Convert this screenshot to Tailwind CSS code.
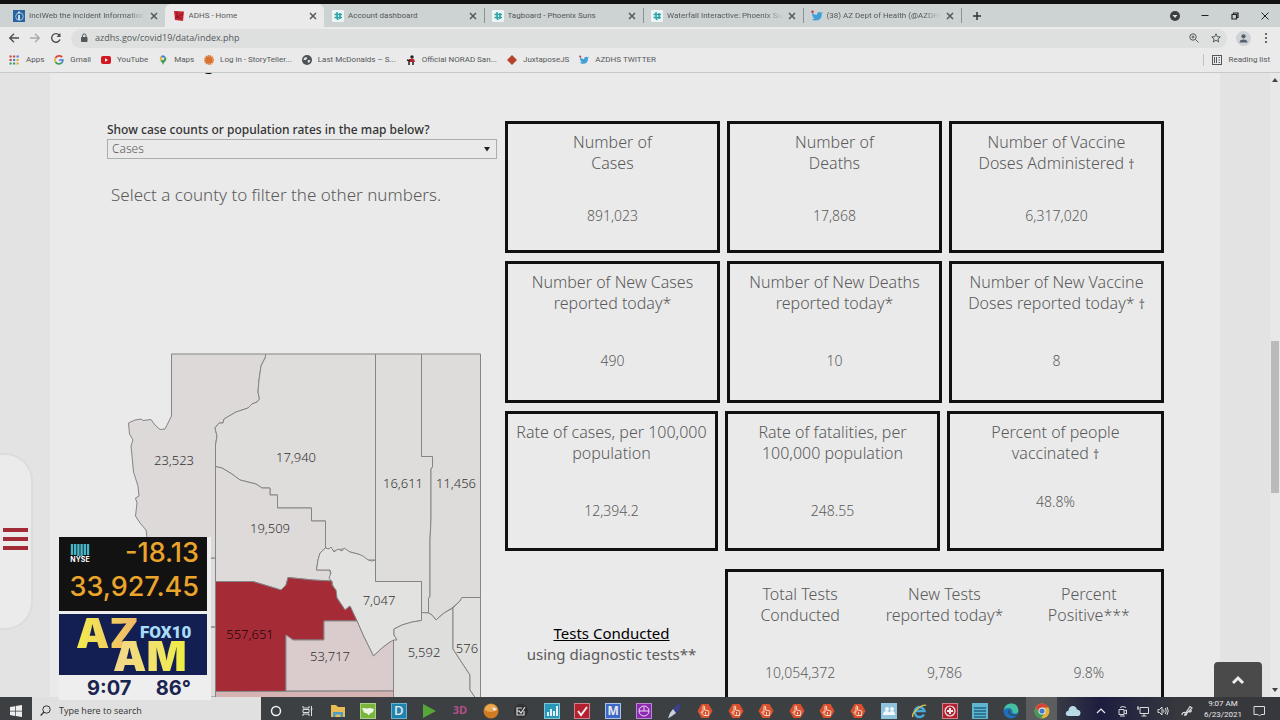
<!DOCTYPE html>
<html lang="en">

    <head>
        <meta charset="UTF-8">
        <meta name="viewport" content="width=device-width, initial-scale=1.0">
        <title>ADHS - Home</title>
        <script src="https://cdn.jsdelivr.net/npm/@tailwindcss/browser@4"></script>
    </head>

    <body class="relative flex h-screen flex-col overflow-hidden bg-[#eaeaea] font-['Open_Sans',sans-serif] text-[#55585a]">

        <!-- Shared icons -->
        <svg class="hidden">
            <symbol id="x" viewBox="0 0 10 10"><path d="M2 2l6 6M8 2l-6 6" stroke="currentColor" stroke-width="1.5" /></symbol>
            <symbol id="tagboard" viewBox="0 0 12 12">
                <rect width="12" height="12" rx="1" fill="#eef5f5" />
                <path d="M5 2v6q0 1.500 1.500 1.500M8 3v6M2.500 4.500H10M2.500 7.500H10" fill="none" stroke="#2aa3a8" stroke-width="1.500" />
            </symbol>
            <symbol id="twitter" viewBox="0 0 12 12">
                <path d="M1 2.500q2 2.500 5 2.500 0-3 2.500-3 1 0 1.700.7L11.800 2q-.2 1-1 1.500.2 7-6.300 7Q2.300 10.500.6 9.400q2 0 3-.9Q2 8 1.500 6.700h1Q1 6 1 4.300l.9.200Q.4 3.500 1 2.500z" fill="#3f9fd6" />
                <circle cx="1.500" cy="1.800" r="1.300" fill="#c33b4c" />
            </symbol>
            <symbol id="hand" viewBox="0 0 16 16">
                <path d="M4.500 1h7L15.500 8l-4 7h-7L.5 8z" fill="#d9512c" />
                <path d="M6 9V3.500q.8-1 1.600 0V7l3.700.8q.7.200.6 1l-.5 3.700H6.800L3.800 9.300q.6-1 2.200 0z" fill="none" stroke="#f6ddd4" stroke-width="1" />
                <path d="M8.500 9v2.500" stroke="#f6ddd4" />
            </symbol>
        </svg>

        <div class="h-1 shrink-0 bg-[#111]"></div>

        <!-- Tab strip -->
        <header class="flex h-[23px] shrink-0 items-stretch bg-[#cdd2d3] pl-[5px] text-[8px]">
            <nav class="grid w-[957px] grid-cols-6 font-['Roboto',sans-serif]">
                <a href="#" class="flex items-center gap-1 pr-1.5 pl-2">
                    <svg class="size-3 shrink-0" viewBox="0 0 12 12"><rect width="12" height="12" fill="#2a64a0" /><circle cx="6.500" cy="6.500" r="3.800" fill="none" stroke="#9cc3e6" /><path d="M6 1.500v2M6 5v5" stroke="#fff" stroke-width="1.500" /></svg>
                    <span class="flex-1 overflow-hidden whitespace-nowrap mask-r-from-85%">InciWeb the Incident Information</span>
                    <svg class="size-2.5 shrink-0"><use href="#x" /></svg>
                </a>
                <a href="#" class="flex items-center gap-1 rounded-t-md bg-[#eaeaea] pr-1.5 pl-2">
                    <svg class="size-3 shrink-0" viewBox="0 0 12 12"><path d="M1 1l10 .5L10 11 2 10z" fill="#c62632" /><path d="M4 1.500v6l5 1M2 8l8-4" stroke="#8d1420" fill="none" /></svg>
                    <span class="flex-1 overflow-hidden whitespace-nowrap">ADHS - Home</span>
                    <svg class="size-2.5 shrink-0"><use href="#x" /></svg>
                </a>
                <a href="#" class="flex items-center gap-1 pr-1.5 pl-2">
                    <svg class="size-3 shrink-0"><use href="#tagboard" /></svg>
                    <span class="flex-1 overflow-hidden whitespace-nowrap">Account dashboard</span>
                    <svg class="size-2.5 shrink-0"><use href="#x" /></svg>
                </a>
                <a href="#" class="my-1 flex items-center gap-1 border-l border-[#8d9293] pr-1.5 pl-[7px]">
                    <svg class="size-3 shrink-0"><use href="#tagboard" /></svg>
                    <span class="flex-1 overflow-hidden whitespace-nowrap">Tagboard - Phoenix Suns</span>
                    <svg class="size-2.5 shrink-0"><use href="#x" /></svg>
                </a>
                <a href="#" class="my-1 flex items-center gap-1 border-l border-[#8d9293] pr-1.5 pl-[7px]">
                    <svg class="size-3 shrink-0"><use href="#tagboard" /></svg>
                    <span class="flex-1 overflow-hidden whitespace-nowrap mask-r-from-85%">Waterfall Interactive: Phoenix Sun</span>
                    <svg class="size-2.5 shrink-0"><use href="#x" /></svg>
                </a>
                <a href="#" class="my-1 flex items-center gap-1 border-x border-[#8d9293] pr-1.5 pl-[7px]">
                    <svg class="size-3 shrink-0"><use href="#twitter" /></svg>
                    <span class="flex-1 overflow-hidden whitespace-nowrap mask-r-from-85%">(38) AZ Dept of Health (@AZDHS</span>
                    <svg class="size-2.5 shrink-0"><use href="#x" /></svg>
                </a>
            </nav>
            <button type="button" aria-label="New tab" class="ml-2.5"><svg class="size-2.5" viewBox="0 0 10 10"><path d="M5 1v8M1 5h8" stroke="#333" stroke-width="1.500" /></svg></button>
            <div class="ml-auto flex items-center gap-5 pr-2.5">
                <button type="button" aria-label="Search tabs"><svg class="size-2.5" viewBox="0 0 10 10"><circle cx="5" cy="5" r="5" fill="#3c4043" /><path d="M2.500 4h5L5 7z" fill="#dfe3e3" /></svg></button>
                <button type="button" aria-label="Minimize"><svg class="size-2.5" viewBox="0 0 10 10"><path d="M1.500 4.500h7" stroke="#222" /></svg></button>
                <button type="button" aria-label="Restore"><svg class="size-2.5" viewBox="0 0 10 10"><path d="M2 3.500h4.500V8H2zM3.500 3V2H8v4.500H7" fill="none" stroke="#222" stroke-width="1.200" /></svg></button>
                <button type="button" aria-label="Close"><svg class="size-2.5" viewBox="0 0 10 10"><path d="M1.500 1.500l7 7M8.500 1.500l-7 7" stroke="#222" /></svg></button>
            </div>
        </header>

        <!-- Address bar -->
        <div class="flex h-[22px] shrink-0 items-center gap-[9px] px-2">
            <button type="button" aria-label="Back"><svg class="size-3" viewBox="0 0 12 12"><path d="M11 6H2M6 1.700L1.700 6 6 10.300" fill="none" stroke="#4a4d50" stroke-width="1.300" /></svg></button>
            <button type="button" aria-label="Forward"><svg class="size-3" viewBox="0 0 12 12"><path d="M1 6h9M6 1.700L10.300 6 6 10.300" fill="none" stroke="#a6a9ab" stroke-width="1.300" /></svg></button>
            <button type="button" aria-label="Reload"><svg class="size-3" viewBox="0 0 12 12"><path d="M10 7.500A4.300 4.300 0 1 1 9.300 3.200" fill="none" stroke="#4a4d50" stroke-width="1.400" /><path d="M10.500 1v4h-4z" fill="#4a4d50" /></svg></button>
            <div class="flex h-[19px] flex-1 items-center rounded-full bg-[#dde0df] pr-1.5 pl-2">
                <svg class="mr-1.5 size-2.5" viewBox="0 0 10 10"><rect x="2" y="4" width="6.500" height="5" rx=".7" fill="#54585b" /><path d="M3.500 4V2.700a1.700 1.700 0 0 1 3.500 0V4" fill="none" stroke="#54585b" /></svg>
                <input type="text" aria-label="Address" value="azdhs.gov/covid19/data/index.php" class="w-0 flex-1 bg-transparent text-[9px] outline-none">
                <svg class="mr-3 size-2.5" viewBox="0 0 10 10"><circle cx="4" cy="4" r="3.200" fill="none" stroke="#55585b" /><path d="M6.500 6.500L9.500 9.500M2.500 4h3M4 2.500v3" stroke="#55585b" /></svg>
                <svg class="size-2.5" viewBox="0 0 10 10"><path d="M5 .8l1.200 2.900 3.100.2-2.400 2 .8 3L5 7.300 2.300 8.900l.8-3-2.400-2 3.100-.2z" fill="none" stroke="#4a4d50" stroke-width=".9" /></svg>
            </div>
            <button type="button" aria-label="Profile"><svg class="size-[15px]" viewBox="0 0 15 15"><circle cx="7.500" cy="7.500" r="7.500" fill="#cfd3d8" /><circle cx="7.500" cy="5.300" r="2.100" fill="#56606e" /><path d="M3.500 11.500q0-3 4-3t4 3z" fill="#56606e" /></svg></button>
            <button type="button" aria-label="Menu"><svg class="size-3" viewBox="0 0 12 12"><circle cx="6" cy="2" r="1.100" fill="#4a4d50" /><circle cx="6" cy="6" r="1.100" fill="#4a4d50" /><circle cx="6" cy="10" r="1.100" fill="#4a4d50" /></svg></button>
        </div>

        <!-- Bookmarks -->
        <nav class="flex h-6 shrink-0 items-center gap-2.5 border-b border-[#c8caca] pr-2.5 pb-0.5 pl-2 font-['Roboto',sans-serif] text-[8px] whitespace-nowrap">
            <a href="#" class="flex items-center gap-1.5"><svg class="size-3" viewBox="0 0 12 12"><path d="M1.500 2.500h2.200M1.500 6h2.200M5 2.500h2.200" stroke="#c9483f" stroke-width="2" /><path d="M1.500 9.500h2.200M5 9.500h2.200" stroke="#45965b" stroke-width="2" /><path d="M8.500 2.500h2.200M5 6h2.200" stroke="#4a7fd0" stroke-width="2" /><path d="M8.500 6h2.200M8.500 9.500h2.200" stroke="#e0a838" stroke-width="2" /></svg>Apps</a>
            <a href="#" class="flex items-center gap-1.5"><svg class="size-2.5" viewBox="0 0 10 10"><g fill="none" stroke-width="1.700"><path d="M8.200 2.300A4 4 0 0 0 1.500 3" stroke="#d8493e" /><path d="M1.500 3a4 4 0 0 0 0 4" stroke="#e8b236" /><path d="M1.500 7a4 4 0 0 0 6 1" stroke="#44a05a" /><path d="M7.500 8A4 4 0 0 0 8.900 5H5" stroke="#4680d8" /></g></svg>Gmail</a>
            <a href="#" class="flex items-center gap-1.5"><svg class="size-2.5" viewBox="0 0 10 10"><rect y="1" width="10" height="8" rx="2" fill="#d3161f" /><path d="M4 3.300v3.400L7 5z" fill="#fff" /></svg>YouTube</a>
            <a href="#" class="flex items-center gap-1.5"><svg class="size-2.5" viewBox="0 0 10 10"><path d="M5 10Q4.500 7.500 2.500 6L7.500 2q1.800 2-.2 4.200Q5.500 8 5 10z" fill="#3f9c56" /><path d="M2.500 6Q.7 3 3 1l2 2z" fill="#e0b030" /><path d="M3 1q2.500-2 4.600.8L5 4z" fill="#4680d8" /><circle cx="5" cy="3.700" r="1.200" fill="#eaeaea" /></svg>Maps</a>
            <a href="#" class="flex items-center gap-1.5"><svg class="size-2.5" viewBox="0 0 10 10"><circle cx="5" cy="5" r="4.200" fill="none" stroke="#d9722f" stroke-width="1.500" stroke-dasharray="1.300 .7" /><circle cx="5" cy="5" r="3.800" fill="#d9722f" /></svg>Log in - StoryTeller...</a>
            <a href="#" class="flex items-center gap-1.5"><svg class="size-2.5" viewBox="0 0 10 10"><circle cx="5" cy="5" r="5" fill="#4e5255" /><path d="M2 3l2-1 1.500 1L4 5 1.500 5zM6 5l2.500 0L7 8 5.500 7z" fill="#dfe1e1" /></svg>Last McDonalds – S...</a>
            <a href="#" class="flex items-center gap-1.5"><svg class="size-2.5" viewBox="0 0 10 10"><circle cx="6" cy="2" r="1.700" fill="#222" /><path d="M3 4h5l1 3H2z" fill="#b3262d" /><path d="M3 7v3M7 7v3M1 5l3 1" stroke="#222" stroke-width="1.500" /></svg>Official NORAD San...</a>
            <a href="#" class="flex items-center gap-1.5"><svg class="size-2.5" viewBox="0 0 10 10"><path d="M5 0l5 5-5 5-5-5z" fill="#b5442d" /></svg>JuxtaposeJS</a>
            <a href="#" class="flex items-center gap-1.5"><svg class="size-2.5"><use href="#twitter" /></svg>AZDHS TWITTER</a>
            <a href="#" class="ml-auto flex items-center gap-1.5 border-l border-[#c0c2c2] pl-2"><svg class="size-2.5" viewBox="0 0 10 10"><rect x=".5" y=".5" width="9" height="9" fill="none" stroke="#55585b" /><path d="M2.500 2v6M4.500 2v6M6.500 2.500h1.500M6.500 5h1.500M6.500 7.500h1.500" stroke="#55585b" /></svg>Reading list</a>
        </nav>

        <!-- Page -->
        <div class="relative flex min-h-0 flex-1">
            <aside class="w-[50px] shrink-0 bg-[#e3e3e3]"></aside>

            <main class="relative flex min-w-0 flex-1 items-start gap-2 overflow-hidden pt-12 pr-14 pl-[57px] font-['Noto_Sans',sans-serif] font-light text-[#5a5a5a]">
                <h2 class="absolute bottom-full left-[154px] -mb-[3px] h-6 text-[17px]/6 font-bold text-black">g</h2>

                <!-- County map -->
                <section class="min-w-0 flex-[390]">
                    <label for="measure" class="block text-[12px]/[18px] font-medium text-[#333]">Show case counts or population rates in the map below?</label>
                    <div class="relative">
                        <select id="measure" class="block h-5 w-full appearance-none border border-[#aaaeae] bg-transparent px-1 text-[12px]/[18px]">
                            <option>Cases</option>
                            <option>Rates</option>
                        </select>
                        <svg class="pointer-events-none absolute top-2 right-1.5 h-[5px] w-2" viewBox="0 0 8 5"><path d="M1 0h6L4 4.500z" fill="#222" /></svg>
                    </div>
                    <p class="mt-6 pl-1 text-[17px]/6">Select a county to filter the other numbers.</p>

                    <svg class="mt-[140px] block h-auto w-full" viewBox="107 347 390 350" stroke="#858585" stroke-width="1" stroke-linejoin="round">
                        <!-- La Paz -->
                        <path d="M150 558L215.500 558V627H150zM150 627H215.500V697H150z" fill="#dedcdc" />
                        <!-- Mohave -->
                        <path d="M171.500 354V416L165 429 160 429.500 155 425 151 419.500 143 420.500 141 419 135 420 128.500 423 129.500 434 133 440 131 446 132 456 133.500 472 138 486 139 496 135.500 498 137 503 135.500 516 140 523 146 530 148 545 160 558H215.500V445L217 436 215 428 219 423 223 423 224 419 236 412 248 408 252 404 257 402 259.500 399 258 392 259 380 261 366 265.500 357V354z" fill="#dcd9d8" />
                        <!-- Coconino -->
                        <path d="M265.500 354V357L261 366 259 380 258 392 259.500 399 257 402 252 404 248 408 236 412 224 419 223 423 219 423 215 428 217 436 215.500 445V466.500L222 468 232 474 240 480 256 484 262 488 270 488V495H277.500V508H311.500V521H325.500V548L329 549 334 551 342 549 350 552 358 554 368 560 375.500 560V354z" fill="#dedddb" />
                        <!-- Navajo -->
                        <path d="M375.500 354H421.500V456.500H432.500V467L431 469V519L430 540V597L428.500 598V613L421.500 612.500V581.500H375.500z" fill="#dedddb" />
                        <!-- Apache -->
                        <path d="M421.500 354H480.500V597.500H462L460 601 452 608 444 613 436 620 432 615 428.500 613V598L430 597V540L431 519V469L432.500 467V456.500H421.500z" fill="#dddcda" />
                        <!-- Yavapai -->
                        <path d="M215.500 466.500L222 468 232 474 240 480 256 484 262 488 270 488V495H277.500V508H311.500V521H325.500V548L320 553 318 560 316.500 570H330L331 581 313 580 288 577.500 286 585 281 590 253 581.500H215.500z" fill="#dedad9" />
                        <!-- Gila -->
                        <path d="M325.500 548L329 549 331 547 334 552 338 549 342 551 344 548 350 552 358 554 363 556 368 560 372 561 375.500 560V581.500H421.500V620.500L412 622 402 625 394 629 394 635 397 640 390 642 382 648 373.500 656 364 637 357 621 350 606 345 610 337 598 334 590 332 582 329 578 331 573 330 570H316.500L318 560 320 553z" fill="#e2e3e1" />
                        <!-- Maricopa -->
                        <path d="M215.500 581.500H253L281 590 286 585 288 577.500 313 580 332 581 332 585 336 590 337 598 345 610 350 606 357 621H324V640H293L286 635V691.500H215.500z" fill="#a52b37" />
                        <!-- Pinal -->
                        <path d="M286 635L293 640H324V621H357L364 637 373.500 656 382 648 390 642 393.500 640V691H286z" fill="#dacccc" />
                        <!-- Pima -->
                        <path d="M215.500 691.500L393.500 691V700H215.500z" fill="#d5b3b3" />
                        <!-- Graham -->
                        <path d="M393.500 640H397L394 635 394 629 402 625 412 622 421.500 620.500V612.500L428.500 613 432 615 436 620 444 613 453 608V649L470 675 470 690 477 700H393.500z" fill="#dededd" />
                        <!-- Greenlee -->
                        <path d="M453 608L460 601 462 597.500H480.500V700H477L470 690 470 675 453 649z" fill="#e0e0df" />
                        <g fill="#333" stroke="none" text-anchor="middle" class="text-[13px]">
                            <text x="174" y="465">23,523</text>
                            <text x="296" y="462">17,940</text>
                            <text x="403" y="488">16,611</text>
                            <text x="456" y="488">11,456</text>
                            <text x="270" y="533">19,509</text>
                            <text x="379" y="605">7,047</text>
                            <text x="250" y="639" fill="#1c0508">557,651</text>
                            <text x="330" y="661">53,717</text>
                            <text x="424" y="657">5,592</text>
                            <text x="467" y="653">576</text>
                        </g>
                    </svg>
                </section>

                <!-- Totals -->
                <section class="min-w-0 flex-[659] space-y-2 text-center text-[16px]/[21px]">
                    <div class="grid grid-cols-3 gap-[7px]">
                        <article class="h-[132px] border-3 border-[#111] pt-2">
                            <h3>Number of<br>Cases</h3>
                            <p class="mt-[31px] text-[14px]/[21px]">891,023</p>
                        </article>
                        <article class="h-[132px] border-3 border-[#111] pt-2">
                            <h3>Number of<br>Deaths</h3>
                            <p class="mt-[31px] text-[14px]/[21px]">17,868</p>
                        </article>
                        <article class="h-[132px] border-3 border-[#111] pt-2">
                            <h3>Number of Vaccine<br>Doses Administered <small class="text-[12px]/[12px] font-normal">†</small></h3>
                            <p class="mt-[31px] text-[14px]/[21px]">6,317,020</p>
                        </article>
                    </div>
                    <div class="grid grid-cols-3 gap-[7px]">
                        <article class="h-[142px] border-3 border-[#111] pt-2">
                            <h3>Number of New Cases<br>reported today*</h3>
                            <p class="mt-9 text-[14px]/[21px]">490</p>
                        </article>
                        <article class="h-[142px] border-3 border-[#111] pt-2">
                            <h3>Number of New Deaths<br>reported today*</h3>
                            <p class="mt-9 text-[14px]/[21px]">10</p>
                        </article>
                        <article class="h-[142px] border-3 border-[#111] pt-2">
                            <h3>Number of New Vaccine<br>Doses reported today* <small class="text-[12px]/[12px] font-normal">†</small></h3>
                            <p class="mt-9 text-[14px]/[21px]">8</p>
                        </article>
                    </div>
                    <div class="grid grid-cols-[213fr_215fr_217fr] gap-[7px]">
                        <article class="h-[140px] border-3 border-[#111] pt-2">
                            <h3>Rate of cases, per 100,000<br>population</h3>
                            <p class="mt-9 text-[14px]/[21px]">12,394.2</p>
                        </article>
                        <article class="h-[140px] border-3 border-[#111] pt-2">
                            <h3>Rate of fatalities, per<br>100,000 population</h3>
                            <p class="mt-9 text-[14px]/[21px]">248.55</p>
                        </article>
                        <article class="h-[140px] border-3 border-[#111] pt-2">
                            <h3>Percent of people<br>vaccinated <small class="text-[12px]/[12px] font-normal">†</small></h3>
                            <p class="mt-[27px] text-[14px]/[21px]">48.8%</p>
                        </article>
                    </div>
                    <div class="grid grid-cols-[213fr_439fr] gap-[7px] pt-2.5">
                        <p class="pt-[54px] text-[15px]/[21px] font-normal"><span class="text-black underline">Tests Conducted</span><br>using diagnostic tests**</p>
                        <div class="h-48 border-3 border-[#111]">
                            <table class="w-full table-fixed">
                                <thead>
                                    <tr>
                                        <th class="pt-3 font-light">Total Tests<br>Conducted</th>
                                        <th class="pt-3 font-light">New Tests<br>reported today*</th>
                                        <th class="pt-3 font-light">Percent<br>Positive***</th>
                                    </tr>
                                </thead>
                                <tbody>
                                    <tr class="text-[14px]/[21px]">
                                        <td class="pt-9">10,054,372</td>
                                        <td class="pt-9">9,786</td>
                                        <td class="pt-9">9.8%</td>
                                    </tr>
                                </tbody>
                            </table>
                        </div>
                    </div>
                </section>
            </main>

            <aside class="w-[50px] shrink-0 bg-[#e3e3e3]"></aside>

            <!-- Scrollbar -->
            <div class="flex w-2.5 shrink-0 flex-col items-center justify-between bg-[#e8e8e8] py-1">
                <svg class="size-1.5" viewBox="0 0 6 6"><path d="M0 5h6L3 1z" fill="#444" /></svg>
                <div class="mt-16 h-[152px] w-2 bg-[#b9bbbb]"></div>
                <svg class="size-1.5" viewBox="0 0 6 6"><path d="M0 1h6L3 5z" fill="#444" /></svg>
            </div>

            <!-- Floating buttons -->
            <button type="button" aria-label="Open menu" class="absolute bottom-[67px] left-0 flex h-[177px] w-[33px] flex-col items-start justify-center gap-[5px] rounded-r-[28px] border-2 border-l-0 border-[#dcdcdc] bg-[#ebebeb] pb-1.5 pl-[3px]">
                <span class="h-1 w-[25px] bg-[#a22b37]"></span>
                <span class="h-1 w-[25px] bg-[#a22b37]"></span>
                <span class="h-1 w-[25px] bg-[#a22b37]"></span>
            </button>
            <button type="button" aria-label="Back to top" class="absolute right-[18px] bottom-0 flex h-[35px] w-12 items-center justify-center rounded-t bg-[#4a4a4a]">
                <svg class="h-2.5 w-3.5" viewBox="0 0 14 10"><path d="M2 8l5-5 5 5" fill="none" stroke="#eee" stroke-width="3" /></svg>
            </button>
        </div>

        <!-- Taskbar -->
        <footer class="flex h-[23px] shrink-0 items-stretch bg-linear-to-r from-[#3d4043] from-82% via-[#1d1d40] via-86% to-[#36383d] to-92% text-[#e8e8e8]">
            <button type="button" aria-label="Start" class="flex w-8 items-center justify-center"><svg class="mt-1 size-3" viewBox="0 0 12 12"><path d="M0 2l5-.8v4.500H0zM5.700 1L12 0v5.700H5.700zM0 6.400h5v4.500L0 10zM5.700 6.400H12V12l-6.300-1z" fill="#eee" /></svg></button>
            <div class="flex w-[229px] items-center gap-2 bg-[#e0e0e0] pt-1 pl-2">
                <svg class="size-[11px]" viewBox="0 0 11 11"><circle cx="6.500" cy="4.500" r="3.700" fill="none" stroke="#333" /><path d="M4 7L.7 10.500" stroke="#333" stroke-width="1.200" /></svg>
                <input type="text" aria-label="Search" placeholder="Type here to search" class="w-0 flex-1 bg-transparent text-[9px] outline-none placeholder:text-[#333]">
            </div>
            <div class="grid flex-1 grid-cols-[repeat(26,minmax(0,1fr))] *:flex *:items-center *:justify-center *:pt-1">
                <button type="button" aria-label="Cortana"><svg class="size-4" viewBox="0 0 16 16"><circle cx="8" cy="8" r="4.500" fill="none" stroke="#eee" stroke-width="1.500" /></svg></button>
                <button type="button" aria-label="Task view"><svg class="size-4" viewBox="0 0 16 16"><path d="M4 3v2h6V3M4 13v-2h6v2M4 6.500h6v3H4zM12.500 3v10M11.500 6h2" fill="none" stroke="#ddd" /></svg></button>
                <button type="button" aria-label="File Explorer"><svg class="size-4" viewBox="0 0 16 16"><path d="M1 2h5l2 2h7v10H1z" fill="#e9bd53" /><path d="M3 14V9h10v5h-2.500v-2.500h-5V14z" fill="#4d9cc9" /></svg></button>
                <button type="button" aria-label="Map app"><svg class="size-4" viewBox="0 0 16 16"><rect x=".5" y=".5" width="15" height="15" fill="#79b43c" stroke="#a9cf83" /><path d="M2 5l5 .5 3-.5 4 1-1 3-3 1.500-1 2-2-2-3-1z" fill="#eef4e6" /></svg></button>
                <button type="button" aria-label="D"><span class="flex size-4 items-center justify-center border border-[#6cb2d0] bg-[#1f83b0] text-[13px] font-semibold">D</span></button>
                <button type="button" aria-label="Play"><svg class="size-4" viewBox="0 0 16 16"><path d="M2 1l13 7-13 7z" fill="#57a639" /></svg></button>
                <button type="button" aria-label="3D"><span class="text-[11px] font-bold text-[#b54f8b]">3D</span></button>
                <button type="button" aria-label="Globe"><svg class="size-4" viewBox="0 0 16 16"><circle cx="8" cy="8" r="7.500" fill="#d07a22" /><path d="M1.500 7q6 4 13 0Q14 2 8 1 2 2 1.500 7z" fill="#e9a653" /><path d="M9 4l5 2-3 2z" fill="#eee" /></svg></button>
                <button type="button" aria-label="Tasks"><svg class="size-4" viewBox="0 0 16 16"><circle cx="8" cy="8" r="7" fill="#2d2f31" /><path d="M11 8v4H4V5h5M6 8l2 2 4-6M4 8h3" fill="none" stroke="#ddd" stroke-width="1.200" /></svg></button>
                <button type="button" aria-label="Charts"><svg class="size-4" viewBox="0 0 16 16"><rect x=".5" y=".5" width="15" height="15" fill="#2b97b8" stroke="#7fc3d6" /><path d="M4 13V9M7 13V6M10 13V8M13 13V3" stroke="#dff3f8" stroke-width="2" /></svg></button>
                <button type="button" aria-label="Check"><svg class="size-4" viewBox="0 0 16 16"><rect x=".5" y=".5" width="15" height="15" fill="#b3202f" stroke="#cf8088" /><path d="M4 8l3 4 6-8" fill="none" stroke="#eee" stroke-width="2" /></svg></button>
                <button type="button" aria-label="M"><span class="flex size-4 items-center justify-center border border-[#a8c0ea] bg-[#3d68c8] text-[12px] font-bold">M</span></button>
                <button type="button" aria-label="Clock app"><svg class="size-4" viewBox="0 0 16 16"><rect x=".5" y=".5" width="15" height="15" fill="#8d28b3" stroke="#b887cc" /><circle cx="8" cy="8" r="5" fill="none" stroke="#eadcf0" /><path d="M8 4v4M3 8h10" stroke="#eadcf0" /></svg></button>
                <button type="button" aria-label="Pen"><svg class="size-4" viewBox="0 0 16 16"><path d="M15 0L9 4 6 8l3 3 4-4z" fill="#3a3f92" /><path d="M7 6l3 4-4 3-4 2.500L4 10z" fill="#c9d3df" /></svg></button>
                <button type="button" aria-label="Touch 1"><svg class="size-4"><use href="#hand" /></svg></button>
                <button type="button" aria-label="Touch 2"><svg class="size-4"><use href="#hand" /></svg></button>
                <button type="button" aria-label="Touch 3"><svg class="size-4"><use href="#hand" /></svg></button>
                <button type="button" aria-label="Touch 4"><svg class="size-4"><use href="#hand" /></svg></button>
                <button type="button" aria-label="Touch 5"><svg class="size-4"><use href="#hand" /></svg></button>
                <button type="button" aria-label="Touch 6"><svg class="size-4"><use href="#hand" /></svg></button>
                <button type="button" aria-label="People"><svg class="size-4" viewBox="0 0 16 16"><rect width="16" height="16" fill="#8fc3de" /><circle cx="6" cy="6" r="2" fill="#f2f7fa" /><circle cx="11" cy="6" r="2" fill="#f2f7fa" /><path d="M2 12q0-4 4-4 2 0 2.500 1.500Q9 8 11 8q3 0 3 4z" fill="#f2f7fa" /></svg></button>
                <button type="button" aria-label="Internet Explorer"><svg class="size-4" viewBox="0 0 16 16"><path d="M13 11.500A5 5 0 1 1 13.500 8H5" fill="none" stroke="#49a9d8" stroke-width="2.500" /><path d="M2 14Q0 11 7 5.500 13 1 15 2.500" fill="none" stroke="#e5c646" stroke-width="1.300" /></svg></button>
                <button type="button" aria-label="Plus"><svg class="size-4" viewBox="0 0 16 16"><rect x=".5" y=".5" width="15" height="15" fill="#b3202f" stroke="#cf8088" /><circle cx="8" cy="8" r="5" fill="none" stroke="#eee" stroke-width="1.200" /><path d="M8 5v6M5 8h6" stroke="#eee" stroke-width="2" /></svg></button>
                <button type="button" aria-label="Notes"><svg class="size-4" viewBox="0 0 16 16"><rect width="16" height="16" fill="#5fb4d0" /><path d="M2 5h12M2 8h12M2 11h12M2 14h12" stroke="#1f6480" stroke-width="1.300" /></svg></button>
                <button type="button" aria-label="Edge"><svg class="size-4" viewBox="0 0 16 16"><circle cx="8" cy="8" r="7.500" fill="#1e72bd" /><path d="M.7 7Q2 .5 8 .5q7 0 7.500 7 0 3-4 3-2.500 0-2-2Q9 5 5.500 5 2 5 .7 7z" fill="#45bfa0" /><path d="M6 7q-1 5 6 5.500l2-.5" fill="none" stroke="#3a4145" stroke-width="1.200" /></svg></button>
                <button type="button" aria-label="Chrome" class="bg-[#5b5d5f]"><svg class="size-4" viewBox="0 0 16 16"><circle cx="8" cy="8" r="7.500" fill="#e2b23c" /><path d="M1.500 4.300Q4 .5 8 .5q4.500 0 6.500 4H8L5 9z" fill="#cf4437" /><path d="M1.500 4.300Q0 7 .7 10q1.500 5 6.300 5.400L10.500 10 5 10z" fill="#42995a" /><circle cx="8" cy="8" r="3.500" fill="#eee" /><circle cx="8" cy="8" r="2.600" fill="#4579cf" /></svg></button>
            </div>
            <div class="flex w-[223px] items-center pt-1">
                <svg class="mx-2 size-4" viewBox="0 0 16 16"><path d="M3 13q-3-1-2-3.500.5-1.500 2.500-2Q4 3 8 3q3 0 4 3.500Q15.500 7 15.500 10q0 2.500-2 3z" fill="#b7dbe8" /></svg>
                <svg class="mx-1.5 size-3" viewBox="0 0 12 12"><path d="M2 8l4-4 4 4" fill="none" stroke="#eee" stroke-width="1.200" /></svg>
                <svg class="mx-1 size-3" viewBox="0 0 12 12"><path d="M2 4.500h5v5H2zM7 6l2.500-1v4L7 8M3 2.500q3-2 6 0M3 11h5" fill="none" stroke="#ddd" /></svg>
                <svg class="mx-1 size-3" viewBox="0 0 12 12"><path d="M3 2.500h8.500v6H3zM1 1v4M0 3h2M7 8.500v2.500M4.500 11h5" fill="none" stroke="#ddd" /></svg>
                <svg class="mx-1 size-3" viewBox="0 0 12 12"><path d="M1 4.500h1.500L5 2v8L2.500 7.500H1zM6.500 4.500q1 1.500 0 3M8.300 3q2 3 0 6M10 2q2.500 4 0 8" fill="none" stroke="#ddd" /></svg>
                <svg class="mx-2 size-3" viewBox="0 0 12 12"><path d="M1 10q0-3 3-2.500T5 10q-2 1-1-1l5-7.500 2 1.500-5 5M8 7q3 0 2-2" fill="none" stroke="#ddd" stroke-width="1.200" /></svg>
                <div class="-mt-1 w-11 text-center font-['Roboto',sans-serif] text-[8px]/[11px]">9:07 AM<br>6/23/2021</div>
                <svg class="mx-2 size-3" viewBox="0 0 12 12"><path d="M1 1.500h10.500v8H8L6.500 11 5 9.500H1z" fill="none" stroke="#ddd" /></svg>
            </div>
        </footer>

        <!-- TV ticker -->
        <div class="absolute bottom-5 left-[59px] flex w-[152px] flex-col gap-[3px] bg-[#eeeeee] font-['Inter',sans-serif]">
            <div class="mr-1 h-[74px] bg-[#111211] px-2 text-right text-[#eba42b]">
                <div class="flex h-[33px] items-center justify-between pl-[3px]">
                    <div class="w-5 text-center text-[7px]/[8px] font-bold text-white">
                        <svg class="h-3 w-5" viewBox="0 0 20 12"><path d="M2 0v11M5.200 0v11M8.400 0v12M11.600 0v12M14.800 0v11M18 0v11" stroke="#46b6c8" stroke-width="2.400" /></svg>
                        NYSE
                    </div>
                    <span class="text-[27px] font-medium">-18.13</span>
                </div>
                <div class="text-[27px]/[34px] font-medium">33,927.45</div>
            </div>
            <div class="relative mr-1 h-[61px] bg-[#131f52] text-[42px]/[30px] font-black text-[#efe94f]">
                <span class="absolute top-1 left-[17px] bg-linear-to-r from-[#f2ec4d] to-[#f0b568] bg-clip-text text-transparent">AZ</span>
                <span class="absolute top-[27px] left-[54px] bg-linear-to-r from-[#f3d68b] to-[#efec3f] bg-clip-text text-transparent">AM</span>
                <span class="absolute top-[10px] left-[81px] font-['Roboto',sans-serif] text-[17px]/[17px] font-black text-[#a9dcf8]">FOX10</span>
            </div>
            <div class="flex h-[22px] justify-between pr-5 pl-7 text-[20px]/[20px] font-bold text-[#1a2450]">
                <span>9:07</span>
                <span>86°</span>
            </div>
        </div>
    </body>

</html>
